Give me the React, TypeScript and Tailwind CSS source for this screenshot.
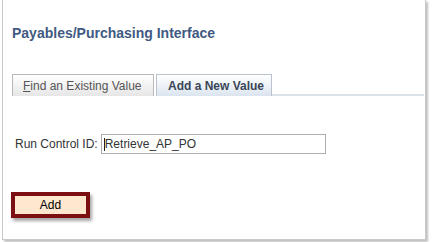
export default function App() {
  return (
    <div className="w-[433px] h-[242px] bg-white overflow-hidden font-['Liberation_Sans',Arial,sans-serif]">
      <div className="ml-[2px] w-[424px] h-[240px] border-x border-b border-[#c9c9c9] bg-white shadow-[2px_2px_2px_rgba(0,0,0,0.25)]">
        <h1 className="pl-[9px] pt-[25px] text-[14px] leading-[16px] font-bold text-[#3f5a82]">
          Payables/Purchasing Interface
        </h1>

        <div className="flex items-end pl-[9px] mt-[33px]">
          <div className="w-[142px] h-[22px] border border-b-0 border-[#b9b9b9] bg-gradient-to-b from-white to-[#e6e6e6] flex items-center pl-[10px] text-[12px] text-[#555]">
            <span>
              <span className="underline">F</span>ind an Existing Value
            </span>
          </div>
          <div className="ml-[2px] w-[116px] h-[22px] border border-b-0 border-[#b9c3cf] bg-gradient-to-b from-white to-[#dbe5ef] flex items-center pl-[11px] text-[12px] font-bold text-[#3a4656]">
            Add a New Value
          </div>
          <div className="flex-1 h-[2px] bg-[#dbe3ea] mr-[1px]" />
        </div>

        <div className="flex items-center pl-[12px] mt-[38px] text-[12px] text-[#333]">
          <span className="mr-[3px]">Run Control ID:</span>
          <div className="w-[225px] h-[20px] border border-[#adadad] flex items-center pl-[2px]">
            <span className="w-px h-[13px] bg-[#222]" />
            <span>Retrieve_AP_PO</span>
          </div>
        </div>

        <button className="ml-[8px] mt-[38px] w-[79px] h-[26px] border-[4px] border-[#7c0f12] bg-[#fde8cf] text-[12px] text-black shadow-[2px_3px_3px_rgba(0,0,0,0.35)] flex items-center justify-center">
          Add
        </button>
      </div>
    </div>
  );
}
